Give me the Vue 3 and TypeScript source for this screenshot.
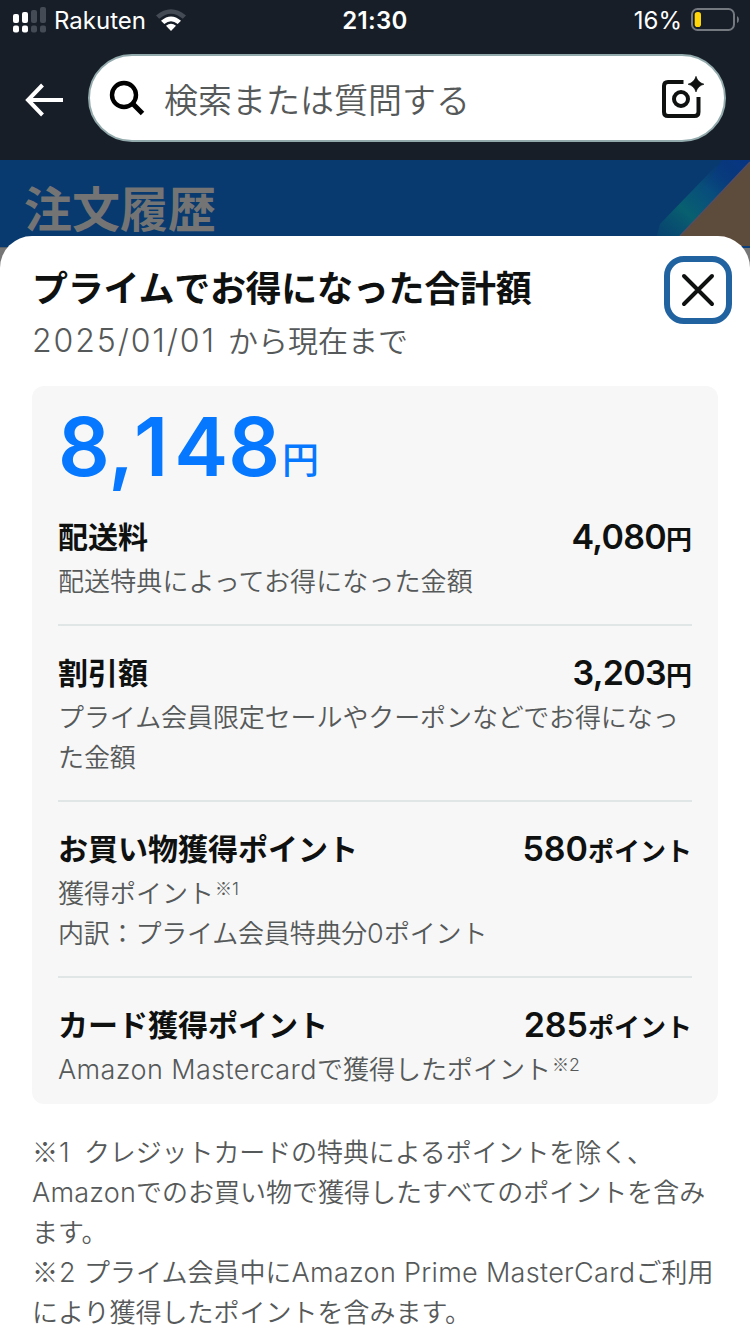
<script setup lang="ts">
interface Section {
  title: string
  value: string
  unit: string
  valueClass: string
}

const sections: Section[] = [
  { title: '配送料', value: '4,080', unit: '円', valueClass: 'yen' },
  { title: '割引額', value: '3,203', unit: '円', valueClass: 'yen' },
  { title: 'お買い物獲得ポイント', value: '580', unit: 'ポイント', valueClass: 'point' },
  { title: 'カード獲得ポイント', value: '285', unit: 'ポイント', valueClass: 'point' },
]
</script>

<template>
  <div class="screen">
    <header class="topbar">
      <div class="status">
        <div class="carrier">
          <svg class="signal" width="34" height="26" viewBox="0 0 34 26">
            <g fill="#fff">
              <rect x="0" y="7" width="6" height="9" rx="2" />
              <rect x="9" y="5" width="6" height="11" rx="2" />
              <rect x="0" y="18.500" width="6" height="7" rx="2" />
              <rect x="9" y="18.500" width="6" height="7" rx="2" />
            </g>
            <g fill="#454b55">
              <rect x="18" y="3" width="6" height="13" rx="2" />
              <rect x="27" y="0" width="6" height="16" rx="2" />
              <rect x="18" y="18.500" width="6" height="7" rx="2" />
              <rect x="27" y="18.500" width="6" height="7" rx="2" />
            </g>
          </svg>
          <span class="carrier-name">Rakuten</span>
          <svg class="wifi" width="30" height="22" viewBox="0 0 30 22">
            <path d="M0 6.600 Q15 -6.200 30 6.600 L26.800 9.800 Q15 -.5 3.200 9.800 Z" fill="#454b55" />
            <path d="M5 11.700 Q15 3.100 25 11.700 L21.700 15 Q15 9.300 8.300 15 Z" fill="#fff" />
            <path d="M10 16.800 Q15 12.800 20 16.800 L15 22 Z" fill="#fff" />
          </svg>
        </div>
        <span class="clock">21:30</span>
        <div class="power">
          <span class="percent">16%</span>
          <svg width="50" height="24" viewBox="0 0 50 24">
            <rect x="2" y="1" width="42" height="21" rx="5.500" fill="none" stroke="#74787f" stroke-width="2" />
            <rect x="4.700" y="4" width="6.300" height="15" rx="2.800" fill="#ffd60a" />
            <path d="M47 8 Q49 9 49 11.500 Q49 14 47 15 Z" fill="#74787f" />
          </svg>
        </div>
      </div>
      <div class="searchrow">
        <svg class="back" width="40" height="34" viewBox="0 0 40 34" fill="none" stroke="#fff" stroke-width="4">
          <path d="M17.500 2 L3 17 L17.500 32 M3 17 H38" />
        </svg>
        <div class="searchbox">
          <svg class="lens" width="36" height="36" viewBox="0 0 36 36" fill="none" stroke="#000" stroke-width="4.400">
            <circle cx="15" cy="15" r="12" />
            <path d="M23.300 23.300 L33.500 33.500" stroke-width="5" />
          </svg>
          <span class="placeholder">検索または質問する</span>
          <svg class="camera" width="44" height="44" viewBox="0 0 44 44" fill="none" stroke="#0f1111" stroke-width="4">
            <path d="M22.500 6 H7 Q3 6 3 10 V36 Q3 40 7 40 H33.500 Q37.500 40 37.500 36 V21" />
            <circle cx="20" cy="23" r="7" />
            <path d="M35 .3 Q36.700 6.400 43 8.200 Q36.700 9.900 35 16 Q33.300 9.900 27 8.200 Q33.300 6.400 35 .3 Z" fill="#0f1111" stroke="#0f1111" stroke-width=".6" />
          </svg>
        </div>
      </div>
    </header>

    <section class="hero">
      <svg class="ribbon" width="100" height="88" viewBox="0 0 100 88">
        <defs>
          <linearGradient id="teal" gradientUnits="userSpaceOnUse" x1="76" y1="4" x2="8" y2="82">
            <stop offset="0" stop-color="#083b85" stop-opacity="0" />
            <stop offset=".3" stop-color="#085a80" stop-opacity=".6" />
            <stop offset=".6" stop-color="#08606f" />
            <stop offset="1" stop-color="#085070" stop-opacity=".3" />
          </linearGradient>
          <linearGradient id="navy" x1="1" y1="0" x2="0" y2="1">
            <stop offset="0" stop-color="#08328a" stop-opacity=".7" />
            <stop offset="1" stop-color="#08427a" stop-opacity="0" />
          </linearGradient>
        </defs>
        <path d="M72 0 H100 V4 L32 75 L17 86 Z" fill="url(#navy)" />
        <path d="M66 6 L84 0 L80 22 L30 76 L20 86 H4 L10 64 Z" fill="url(#teal)" />
        <path d="M100 2 V86 H20 L30 76 Z" fill="#5d4b3b" />
        <path d="M100 2 L30 76" stroke="#564c60" stroke-width="1.500" />
        <path d="M80 87 H100" stroke="#0a3f7c" stroke-width="2" />
      </svg>
      <h1>注文履歴</h1>
    </section>

    <main class="sheet">
      <div class="sheet-head">
        <div>
          <h2>プライムでお得になった合計額</h2>
          <p class="period"><span class="latin date">2025/01/01</span>から現在まで</p>
        </div>
        <button class="close" type="button" aria-label="閉じる">
          <svg width="36" height="36" viewBox="0 0 36 36" stroke="#0f1111" stroke-width="4" stroke-linecap="round">
            <path d="M4 4 L32 32 M32 4 L4 32" />
          </svg>
        </button>
      </div>

      <div class="card">
        <div class="total"><span class="total-value">8<span class="comma">,</span><span class="one">1</span>48</span><span class="total-unit">円</span></div>
        <section v-for="(section, index) in sections" :key="section.title" class="item">
          <div class="item-row">
            <h3>{{ section.title }}</h3>
            <div class="amount" :class="section.valueClass">
              <span class="amount-value">{{ section.value }}</span><span class="amount-unit">{{ section.unit }}</span>
            </div>
          </div>
          <p v-if="index === 0" class="shipping">配送特典によってお得になった金額</p>
          <p v-else-if="index === 1" class="discount">プライム会員限定セールやクーポンなどでお得になった金額</p>
          <template v-else-if="index === 2">
            <p>獲得ポイント<span class="note-mark">※<span class="latin">1</span></span></p>
            <p class="breakdown">内訳：プライム会員特典分<span class="latin">0</span>ポイント</p>
          </template>
          <p v-else><span class="latin mastercard">Amazon Mastercard</span>で獲得したポイント<span class="note-mark">※<span class="latin">2</span></span></p>
        </section>
      </div>

      <footer class="notes">
        <p><span class="first-note">※<span class="latin num">1</span>クレジットカードの特典によるポイントを除く、</span><br /><span class="latin">Amazon</span>でのお買い物で獲得したすべてのポイントを含み<br />ます。</p>
        <p>※<span class="latin num">2</span>プライム会員中に<span class="latin prime">Amazon Prime MasterCard</span>ご利用<br />により獲得したポイントを含みます。</p>
      </footer>
    </main>
  </div>
</template>

<style>
body {
  margin: 0;
  background: #767676;
}
</style>

<style scoped>
.screen {
  width: 750px;
  height: 1334px;
  overflow: hidden;
  display: flex;
  flex-direction: column;
  background: #767676;
  color: #0f1111;
  font-family: "Noto Sans CJK JP", sans-serif;
}
h1, h2, h3, p {
  margin: 0;
}
.topbar {
  height: 160px;
  flex: none;
  background: #171e27;
}
.status {
  height: 40px;
  display: grid;
  grid-template-columns: 1fr auto 1fr;
  color: #fff;
  font-family: Inter, sans-serif;
  font-size: 24px;
  line-height: 42px;
}
.carrier {
  display: flex;
  align-items: flex-start;
  padding-left: 13px;
}
.signal {
  margin-top: 7px;
}
.carrier-name {
  margin-left: 7px;
  width: 93px;
}
.wifi {
  margin: 9px 0 0 9px;
}
.clock {
  font-weight: 600;
  letter-spacing: .3px;
}
.power {
  display: flex;
  justify-content: flex-end;
  padding-right: 10px;
  gap: 8px;
}
.power svg {
  margin: 8px 0 0;
  flex: none;
}
.searchrow {
  display: flex;
  align-items: flex-start;
  padding: 14px 24px 0 25px;
}
.back {
  margin: 29px 23px 0 0;
}
.searchbox {
  flex: 1;
  height: 84px;
  border: 2px solid #93aaac;
  border-radius: 44px;
  background: #fff;
  display: flex;
  align-items: center;
}
.lens {
  margin-left: 19px;
}
.placeholder {
  flex: 1;
  margin-left: 19px;
  font-size: 34px;
  font-weight: 350;
  line-height: 84px;
  padding-top: 2px;
  color: #565959;
}
.camera {
  margin-right: 19px;
}
.hero {
  position: relative;
  height: 87px;
  flex: none;
  background: #083a70;
  border-bottom: 1px solid #56606a;
}
.ribbon {
  position: absolute;
  right: 0;
  top: 0;
}
h1 {
  padding: 11px 0 0 24px;
  font-size: 48px;
  line-height: 70px;
  font-weight: 700;
  color: #747474;
}
.sheet {
  position: relative;
  flex: 1;
  margin-top: -12px;
  padding: 20px 32px 0;
  border-radius: 32px 32px 0 0;
  background: #fff;
}
.sheet-head {
  display: flex;
  justify-content: space-between;
  height: 130px;
  margin-right: -14px;
}
h2 {
  margin-top: 5px;
  font-size: 36px;
  line-height: 50px;
  font-weight: 700;
  letter-spacing: -.28px;
}
.period {
  font-size: 30px;
  line-height: 56px;
  font-weight: 350;
  color: #565959;
}
.latin {
  font-family: Inter, sans-serif;
  font-size: 1.04em;
  font-weight: 350;
  line-height: 0;
  letter-spacing: .2px;
}
.date {
  display: inline-block;
  width: 196px;
  font-size: 32px;
  letter-spacing: 1.9px;
}
.close {
  display: flex;
  align-items: center;
  justify-content: center;
  width: 68px;
  height: 68px;
  padding: 0;
  border: 6px solid #2162a1;
  border-radius: 20px;
  background: #fff;
}
.card {
  height: 718px;
  box-sizing: border-box;
  padding: 0 26px;
  border-radius: 12px;
  background: #f7f7f7;
}
.total {
  height: 104px;
  color: #0578ff;
  line-height: 166px;
  white-space: nowrap;
}
.total-value {
  font-family: Inter, sans-serif;
  font-size: 81px;
  font-weight: 600;
  line-height: 0;
}
.comma {
  letter-spacing: 0;
}
.one {
  letter-spacing: 6px;
}
.total-unit {
  margin-left: 2px;
  font-size: 37px;
  font-weight: 500;
  line-height: 0;
  vertical-align: 2px;
}
.item {
  padding: 22px 0 24px;
}
.item + .item {
  border-top: 2px solid #e0e6e5;
}
.item-row {
  display: flex;
  justify-content: space-between;
  height: 48px;
  line-height: 47px;
}
h3 {
  font-size: 30px;
  font-weight: 700;
}
.amount {
  white-space: nowrap;
  padding-top: 2px;
}
.amount-value {
  font-family: Inter, sans-serif;
  font-size: 34px;
  font-weight: 600;
  line-height: 0;
}
.yen .amount-value {
  letter-spacing: -.7px;
}
.amount-unit {
  font-size: 26px;
  font-weight: 700;
}
.item p {
  font-size: 26px;
  line-height: 40px;
  font-weight: 350;
  color: #565959;
}
.item .shipping {
  letter-spacing: .1px;
}
.item .discount {
  letter-spacing: -.1px;
}
.item .breakdown {
  letter-spacing: -.2px;
}
.item .mastercard {
  letter-spacing: .4px;
}
.note-mark {
  font-size: 17px;
  line-height: 0;
  vertical-align: 8px;
  margin-left: 1px;
}
.notes {
  margin: 27px -10px 0 0;
  font-size: 26px;
  line-height: 40px;
  font-weight: 350;
  color: #565959;
  white-space: nowrap;
}
.first-note {
  letter-spacing: -.1px;
}
.num {
  display: inline-block;
  width: 26px;
  text-indent: 1px;
}
.prime {
  letter-spacing: .3px;
}
</style>
